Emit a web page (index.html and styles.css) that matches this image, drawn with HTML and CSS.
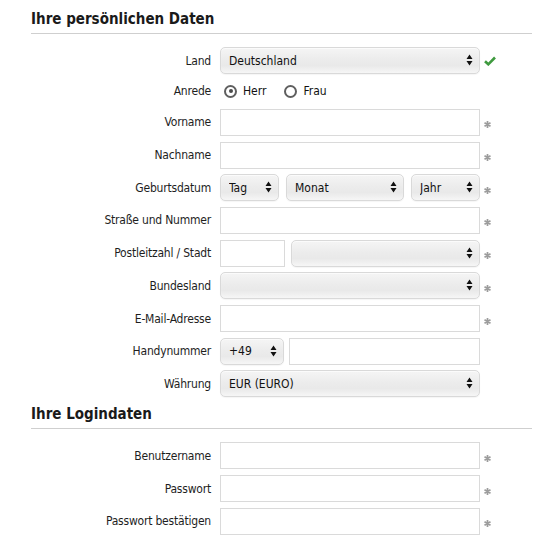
FILE: index.html
```html
<!DOCTYPE html>
<html lang="de">
<head>
<meta charset="utf-8">
<title>Registrierung</title>
<link rel="stylesheet" href="styles.css">
</head>
<body>
<div class="page">
  <h2 class="sec-title first">Ihre persönlichen Daten</h2>
  <div class="form">
    <label class="lbl">Land</label>
    <div class="ctrl"><div class="sel"><select><option>Deutschland</option></select><svg class="arr" width="7" height="12" viewBox="0 0 7 12"><path d="M3.5 0.5 L6.5 5 L0.5 5 Z M0.5 7 L6.5 7 L3.5 11.5 Z" fill="#111"/></svg></div></div>
    <div class="mark"><svg class="check" width="12" height="10" viewBox="0 0 12 10"><path d="M1 5.2 L4.3 8.3 L11 1.5" fill="none" stroke="#3f9a3f" stroke-width="2.6"/></svg></div>

    <label class="lbl">Anrede</label>
    <div class="ctrl radios">
      <span class="radio on"></span><span class="rtext">Herr</span>
      <span class="radio"></span><span class="rtext">Frau</span>
    </div>
    <div class="mark"></div>

    <label class="lbl">Vorname</label>
    <div class="ctrl"><input class="inp" type="text"></div>
    <div class="mark"><svg class="ast" width="7" height="7" viewBox="0 0 7 7"><path d="M3.5 0 V7 M0.5 1.75 L6.5 5.25 M0.5 5.25 L6.5 1.75" stroke="#9c9c9c" stroke-width="1.7"/></svg></div>

    <label class="lbl">Nachname</label>
    <div class="ctrl"><input class="inp" type="text"></div>
    <div class="mark"><svg class="ast" width="7" height="7" viewBox="0 0 7 7"><path d="M3.5 0 V7 M0.5 1.75 L6.5 5.25 M0.5 5.25 L6.5 1.75" stroke="#9c9c9c" stroke-width="1.7"/></svg></div>

    <label class="lbl">Geburtsdatum</label>
    <div class="ctrl split">
      <div class="sel w-tag"><select><option>Tag</option></select><svg class="arr" width="7" height="12" viewBox="0 0 7 12"><path d="M3.5 0.5 L6.5 5 L0.5 5 Z M0.5 7 L6.5 7 L3.5 11.5 Z" fill="#111"/></svg></div>
      <div class="sel w-monat"><select><option>Monat</option></select><svg class="arr" width="7" height="12" viewBox="0 0 7 12"><path d="M3.5 0.5 L6.5 5 L0.5 5 Z M0.5 7 L6.5 7 L3.5 11.5 Z" fill="#111"/></svg></div>
      <div class="sel grow"><select><option>Jahr</option></select><svg class="arr" width="7" height="12" viewBox="0 0 7 12"><path d="M3.5 0.5 L6.5 5 L0.5 5 Z M0.5 7 L6.5 7 L3.5 11.5 Z" fill="#111"/></svg></div>
    </div>
    <div class="mark"><svg class="ast" width="7" height="7" viewBox="0 0 7 7"><path d="M3.5 0 V7 M0.5 1.75 L6.5 5.25 M0.5 5.25 L6.5 1.75" stroke="#9c9c9c" stroke-width="1.7"/></svg></div>

    <label class="lbl">Straße und Nummer</label>
    <div class="ctrl"><input class="inp" type="text"></div>
    <div class="mark"><svg class="ast" width="7" height="7" viewBox="0 0 7 7"><path d="M3.5 0 V7 M0.5 1.75 L6.5 5.25 M0.5 5.25 L6.5 1.75" stroke="#9c9c9c" stroke-width="1.7"/></svg></div>

    <label class="lbl">Postleitzahl / Stadt</label>
    <div class="ctrl split plz">
      <input class="inp w-plz" type="text">
      <div class="sel grow"><select><option></option></select><svg class="arr" width="7" height="12" viewBox="0 0 7 12"><path d="M3.5 0.5 L6.5 5 L0.5 5 Z M0.5 7 L6.5 7 L3.5 11.5 Z" fill="#111"/></svg></div>
    </div>
    <div class="mark"><svg class="ast" width="7" height="7" viewBox="0 0 7 7"><path d="M3.5 0 V7 M0.5 1.75 L6.5 5.25 M0.5 5.25 L6.5 1.75" stroke="#9c9c9c" stroke-width="1.7"/></svg></div>

    <label class="lbl">Bundesland</label>
    <div class="ctrl"><div class="sel"><select><option></option></select><svg class="arr" width="7" height="12" viewBox="0 0 7 12"><path d="M3.5 0.5 L6.5 5 L0.5 5 Z M0.5 7 L6.5 7 L3.5 11.5 Z" fill="#111"/></svg></div></div>
    <div class="mark"><svg class="ast" width="7" height="7" viewBox="0 0 7 7"><path d="M3.5 0 V7 M0.5 1.75 L6.5 5.25 M0.5 5.25 L6.5 1.75" stroke="#9c9c9c" stroke-width="1.7"/></svg></div>

    <label class="lbl">E-Mail-Adresse</label>
    <div class="ctrl"><input class="inp" type="text"></div>
    <div class="mark"><svg class="ast" width="7" height="7" viewBox="0 0 7 7"><path d="M3.5 0 V7 M0.5 1.75 L6.5 5.25 M0.5 5.25 L6.5 1.75" stroke="#9c9c9c" stroke-width="1.7"/></svg></div>

    <label class="lbl">Handynummer</label>
    <div class="ctrl split phone">
      <div class="sel w-vorwahl"><select><option>+49</option></select><svg class="arr" width="7" height="12" viewBox="0 0 7 12"><path d="M3.5 0.5 L6.5 5 L0.5 5 Z M0.5 7 L6.5 7 L3.5 11.5 Z" fill="#111"/></svg></div>
      <input class="inp grow" type="text">
    </div>
    <div class="mark"></div>

    <label class="lbl">Währung</label>
    <div class="ctrl"><div class="sel"><select><option>EUR (EURO)</option></select><svg class="arr" width="7" height="12" viewBox="0 0 7 12"><path d="M3.5 0.5 L6.5 5 L0.5 5 Z M0.5 7 L6.5 7 L3.5 11.5 Z" fill="#111"/></svg></div></div>
    <div class="mark"></div>
  </div>

  <h2 class="sec-title second">Ihre Logindaten</h2>
  <div class="form">
    <label class="lbl">Benutzername</label>
    <div class="ctrl"><input class="inp" type="text"></div>
    <div class="mark"><svg class="ast" width="7" height="7" viewBox="0 0 7 7"><path d="M3.5 0 V7 M0.5 1.75 L6.5 5.25 M0.5 5.25 L6.5 1.75" stroke="#9c9c9c" stroke-width="1.7"/></svg></div>

    <label class="lbl">Passwort</label>
    <div class="ctrl"><input class="inp" type="password"></div>
    <div class="mark"><svg class="ast" width="7" height="7" viewBox="0 0 7 7"><path d="M3.5 0 V7 M0.5 1.75 L6.5 5.25 M0.5 5.25 L6.5 1.75" stroke="#9c9c9c" stroke-width="1.7"/></svg></div>

    <label class="lbl">Passwort bestätigen</label>
    <div class="ctrl"><input class="inp" type="password"></div>
    <div class="mark"><svg class="ast" width="7" height="7" viewBox="0 0 7 7"><path d="M3.5 0 V7 M0.5 1.75 L6.5 5.25 M0.5 5.25 L6.5 1.75" stroke="#9c9c9c" stroke-width="1.7"/></svg></div>
  </div>
</div>
</body>
</html>
```

FILE: styles.css
```css
* { box-sizing: border-box; }
html, body { margin: 0; padding: 0; background: #fff; }
body {
  font-family: "DejaVu Sans Condensed", "DejaVu Sans", sans-serif;
  font-size: 12px;
  color: #222;
}
.page {
  padding-left: 31px;
  width: 532px;
}
.sec-title {
  margin: 0 0 13px 0;
  font-size: 15px;
  line-height: 20px;
  font-weight: bold;
  color: #1a1a1a;
  padding-bottom: 4px;
  border-bottom: 1px solid #cfcfcf;
}
.sec-title.first { margin-top: 9px; }
.sec-title.second { margin-top: 7px; }

.form {
  display: grid;
  grid-template-columns: 180px 260px 20px;
  column-gap: 9px;
  row-gap: 5.7px;
  align-items: center;
}
.lbl {
  text-align: right;
  color: #1e1e1e;
  white-space: nowrap;
  letter-spacing: -0.2px;
}
.ctrl { height: 27px; display: flex; align-items: center; }
.ctrl.radios { height: 23.5px; }
.mark { margin-left: -5px; display: flex; align-items: center; }

.inp {
  width: 100%;
  height: 27px;
  border: 1px solid #dadada;
  border-radius: 0;
  background: #fff;
  padding: 0 8px;
  font: inherit;
  outline: none;
}
.sel {
  position: relative;
  width: 100%;
  height: 27px;
}
.sel select {
  -webkit-appearance: none;
  appearance: none;
  width: 100%;
  height: 27px;
  border: 1px solid #d9d9d9;
  border-radius: 5px;
  background: linear-gradient(#f5f5f5 0%, #ececec 45%, #e9e9e9 70%, #f6f6f6 100%);
  box-shadow: inset 0 1px 1px rgba(255,255,255,0.7), 0 1px 1px rgba(0,0,0,0.04);
  padding: 0 20px 0 8px;
  font: inherit;
  color: #111;
  outline: none;
}
.arr {
  position: absolute;
  right: 7px;
  top: 7px;
  pointer-events: none;
}

.split { gap: 7px; }
.split.plz { gap: 6px; }
.split.phone { gap: 5px; }
.w-tag { width: 59px; flex: none; }
.w-monat { width: 118px; flex: none; }
.w-plz { width: 65px; flex: none; }
.w-vorwahl { width: 64px; flex: none; }
.grow { flex: 1; min-width: 0; }

.radios { padding-left: 4px; }
.radio {
  width: 13px;
  height: 13px;
  border-radius: 50%;
  border: 2.5px solid #5f5f5f;
  background: #fff;
  display: inline-flex;
  align-items: center;
  justify-content: center;
  flex: none;
}
.radio.on::after {
  content: "";
  width: 4px;
  height: 4px;
  border-radius: 50%;
  background: #4a4a4a;
}
.rtext { margin-left: 6px; margin-right: 18px; color: #111; }

.check { display: block; }
.ast { display: block; margin-top: 5px; }
```
